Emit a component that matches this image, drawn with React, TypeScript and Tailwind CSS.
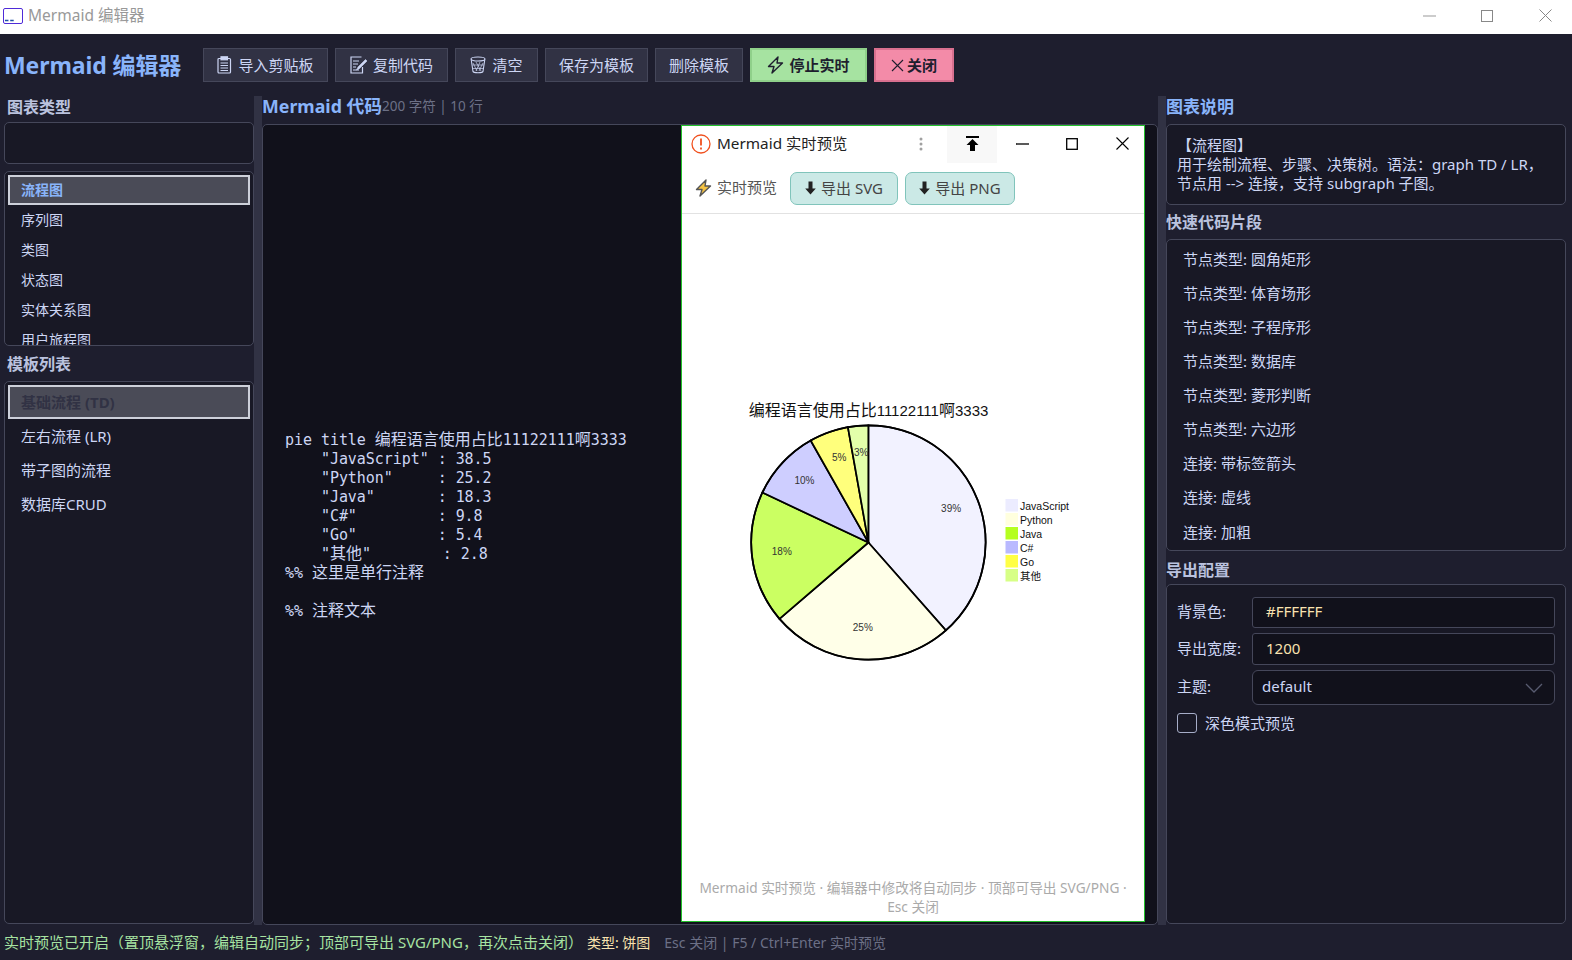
import React from "react";

const sans = "font-['Noto_Sans','Noto_Sans_CJK_SC',sans-serif]";

const pieData = [
  { name: "JavaScript", v: 38.5, c: "#ECECFF", p: "39%" },
  { name: "Python", v: 25.2, c: "#ffffde", p: "25%" },
  { name: "Java", v: 18.3, c: "#b5ff20", p: "18%" },
  { name: "C#", v: 9.8, c: "#b9b9ff", p: "10%" },
  { name: "Go", v: 5.4, c: "#ffff45", p: "5%" },
  { name: "其他", v: 2.8, c: "#d7ff86", p: "3%" },
];

function Pie() {
  const cx = 125.4, cy = 145.5, r = 117.2;
  const total = pieData.reduce((s, d) => s + d.v, 0);
  let a = 0;
  const slices = pieData.map((d) => {
    const s = a;
    const e = a + (d.v / total) * Math.PI * 2;
    a = e;
    const m = (s + e) / 2;
    const large = e - s > Math.PI ? 1 : 0;
    const path = `M${cx} ${cy}L${cx + r * Math.sin(s)} ${cy - r * Math.cos(s)}A${r} ${r} 0 ${large} 1 ${cx + r * Math.sin(e)} ${cy - r * Math.cos(e)}Z`;
    return { ...d, path, tx: cx + 0.75 * r * Math.sin(m), ty: cy - 0.75 * r * Math.cos(m) };
  });
  return (
    <svg width="340" height="298" viewBox="0 0 340 298" className="font-['Liberation_Sans','Noto_Sans_CJK_SC',sans-serif]">
      <text x="125.500" y="19" textAnchor="middle" fontSize="16" fill="#111">
        编程语言使用占比<tspan fontSize="15">11122111</tspan>啊<tspan fontSize="15">3333</tspan>
      </text>
      {slices.map((s) => (
        <path key={s.name} d={s.path} fill={s.c} fillOpacity="0.7" stroke="#000" strokeWidth="1.7" />
      ))}
      <circle cx={cx} cy={cy} r={r} fill="none" stroke="#000" strokeWidth="1.7" />
      {slices.map((s) => (
        <text key={s.name} x={s.tx + 0.5} y={s.ty} dy="1" textAnchor="middle" fontSize="10" fill="#333">{s.p}</text>
      ))}
      {pieData.map((d, i) => (
        <g key={d.name}>
          <rect x="262.500" y={102 + i * 14} width="12.5" height="12.5" fill={d.c} />
          <text x="277" y={112.5 + i * 14} fontSize="10.5" fill="#111">{d.name}</text>
        </g>
      ))}
    </svg>
  );
}

function ClipIcon() {
  return (
    <svg width="15" height="18" viewBox="0 0 15 18" fill="none" stroke="#cdd6f4" strokeWidth="1.2">
      <rect x="1" y="2.5" width="12.5" height="14.5" rx="1" />
      <rect x="4" y="0.8" width="6.5" height="3" fill="#cdd6f4" />
      <path d="M3.5 7h7.5M3.5 9.5h7.5M3.5 12h7.5M3.5 14.5h7.5" strokeWidth="1" />
    </svg>
  );
}
function MemoIcon() {
  return (
    <svg width="17" height="18" viewBox="0 0 17 18" fill="none" stroke="#cdd6f4" strokeWidth="1.2">
      <path d="M11.5 1H1v16h11.5v-6" />
      <path d="M3 5h6M3 8h5M3 11h3M3 14h6" strokeWidth="1" />
      <path d="M15.5 3.5L8 11l-1.5 3 3-1.5L17 5z" fill="#cdd6f4" strokeWidth="0.6" />
    </svg>
  );
}
function TrashIcon() {
  return (
    <svg width="16" height="18" viewBox="0 0 16 18" fill="none" stroke="#cdd6f4" strokeWidth="1.1">
      <ellipse cx="8" cy="3" rx="7" ry="2" />
      <path d="M1.2 3.5L3 15.5c.5 1.6 9.500 1.600 10 0L14.800 3.500" />
      <path d="M3 7l4 8M6 6l5 9M10 6l-4 9M13 7l-4 8M2.500 9h11M3 12.500h10" strokeWidth="0.7" />
    </svg>
  );
}
function Bolt({ fill = "none", stroke = "#1e1e2e" }: { fill?: string; stroke?: string }) {
  return (
    <svg width="17" height="18" viewBox="0 0 17 18" fill={fill} stroke={stroke} strokeWidth="1.4" strokeLinejoin="round">
      <path d="M11 1L1.500 10.500H7L5 17l10.500-10H10z" />
    </svg>
  );
}
function DownArrow() {
  return (
    <svg width="11" height="14" viewBox="0 0 11 14" fill="#222">
      <path d="M3.500 0.500h4v7h3.300L5.500 13.500 0.200 7.500h3.300z" />
    </svg>
  );
}

function Btn({ icon, label, w }: { icon?: React.ReactNode; label: string; w: string }) {
  return (
    <button className={`h-[34px] ${w} flex items-center justify-center gap-[6px] bg-[#313244] border border-[#45475a] text-[15px] text-[#cdd6f4]`}>
      {icon}
      <span>{label}</span>
    </button>
  );
}

function Heading({ children, blue, cls }: { children: React.ReactNode; blue?: boolean; cls: string }) {
  return <div className={`${cls} flex items-center font-bold text-[16px] ${blue ? "text-[#89b4fa]" : "text-[#bac2de]"}`}>{children}</div>;
}

const types = ["序列图", "类图", "状态图", "实体关系图", "用户旅程图"];
const templates = ["左右流程 (LR)", "带子图的流程", "数据库CRUD"];
const snippets = ["节点类型: 圆角矩形", "节点类型: 体育场形", "节点类型: 子程序形", "节点类型: 数据库", "节点类型: 菱形判断", "节点类型: 六边形", "连接: 带标签箭头", "连接: 虚线", "连接: 加粗"];

const code = `pie title 编程语言使用占比11122111啊3333
    "JavaScript" : 38.5
    "Python"     : 25.2
    "Java"       : 18.3
    "C#"         : 9.8
    "Go"         : 5.4
    "其他"        : 2.8
%% 这里是单行注释

%% 注释文本`;

function CodeText() {
  return (
    <div className="font-['DejaVu_Sans_Mono','Noto_Sans_CJK_SC',monospace] text-[15px] tracking-[-0.05px] text-[#cdd6f4]">
      {code.split("\n").map((line, n) => (
        <div key={n} className="h-[19px] leading-[19px] whitespace-pre overflow-visible">
          {line.split(/([\u4e00-\u9fff]+)/).map((p, i) =>
            i % 2 ? <span key={i} className="text-[16px] tracking-normal leading-[1px]">{p}</span> : p
          )}
        </div>
      ))}
    </div>
  );
}

export default function App() {
  return (
    <div className={`w-screen h-screen flex flex-col overflow-hidden bg-[#1e1e2e] text-[#cdd6f4] ${sans}`}>
      {/* window title bar */}
      <div className="h-[34px] shrink-0 bg-white flex items-center pl-[3px] pb-[3px]">
        <svg width="20" height="16" viewBox="0 0 20 16" fill="none" className="mr-[5px]">
          <rect x="0.500" y="0.500" width="19" height="15" rx="1.500" stroke="#4f2bd8" />
          <path d="M3.500 12.500h5M11 12.500h5" stroke="#1f4fa8" strokeWidth="1.500" transform="translate(-0.500,0) scale(0.7,1)" />
        </svg>
        <span className="text-[15.5px] text-[#999]">Mermaid 编辑器</span>
        <div className="ml-auto flex items-center text-[#888]">
          <div className="w-[54px] h-[31px] flex items-center justify-center">
            <svg width="13" height="2"><path d="M0 1h13" stroke="#999" /></svg>
          </div>
          <div className="w-[62px] h-[31px] flex items-center justify-center">
            <svg width="12" height="12"><rect x="0.500" y="0.500" width="11" height="11" fill="none" stroke="#888" /></svg>
          </div>
          <div className="w-[54px] h-[31px] flex items-center justify-center">
            <svg width="13" height="13"><path d="M0.500 0.500l12 12M12.500 0.500l-12 12" stroke="#888" /></svg>
          </div>
        </div>
      </div>

      {/* toolbar */}
      <div className="h-[62px] shrink-0 flex items-center pl-[4px]">
        <div className="w-[199px] text-[23px] font-bold tracking-[-0.1px] text-[#89b4fa] whitespace-nowrap">Mermaid 编辑器</div>
        <div className="flex gap-[7px]">
          <Btn w="w-[125px]" icon={<ClipIcon />} label="导入剪贴板" />
          <Btn w="w-[113px]" icon={<MemoIcon />} label="复制代码" />
          <Btn w="w-[83px]" icon={<TrashIcon />} label="清空" />
          <Btn w="w-[103px]" label="保存为模板" />
          <Btn w="w-[88px]" label="删除模板" />
          <button className="h-[34px] w-[117px] flex items-center justify-center gap-[5px] bg-[#a6e3a1] border-2 border-[#8fd08a] text-[15px] font-bold text-[#1e1e2e]">
            <Bolt />
            <span>停止实时</span>
          </button>
          <button className="h-[34px] w-[80px] flex items-center justify-center gap-[3px] bg-[#f38ba8] border-2 border-[#d9708f] text-[15px] font-bold text-[#1e1e2e]">
            <svg width="13" height="13" viewBox="0 0 13 13"><path d="M1 1l11 11M12 1L1 12" stroke="#1e1e2e" strokeWidth="1.100" /></svg>
            <span>关闭</span>
          </button>
        </div>
      </div>

      {/* columns */}
      <div className="flex-1 min-h-0 flex">
        {/* left */}
        <div className="w-[254px] shrink-0 flex flex-col pl-[4px]">
          <div className="pl-[3px]"><Heading cls="h-[26px] pb-[5px]">图表类型</Heading></div>
          <div className="h-[42px] shrink-0 bg-[#181825] border border-[#45475a] rounded-[5px]" />
          <div className="h-[175px] shrink-0 mt-[7px] bg-[#181825] border border-[#45475a] rounded-[5px] overflow-hidden pt-[3px] pl-[3px] pr-[3px]">
            <div className="h-[30px] flex items-center pl-[11px] pb-[1px] bg-[#4a4b57] border-2 border-[#cdd0da] text-[14px] font-bold text-[#89b4fa]">流程图</div>
            {types.map((t) => (
              <div key={t} className="h-[30px] shrink-0 flex items-center pl-[13px] pb-[2px] text-[14px]">{t}</div>
            ))}
          </div>
          <div className="pl-[3px]"><Heading cls="h-[35px]">模板列表</Heading></div>
          <div className="flex-1 bg-[#181825] border border-[#45475a] rounded-[5px] pt-[3px] px-[3px] mb-[1px]">
            <div className="h-[34px] flex items-center pl-[11px] bg-[#4a4b57] border-2 border-[#cdd0da] text-[15px] font-bold text-[#313244]">基础流程 (TD)</div>
            {templates.map((t) => (
              <div key={t} className="h-[34px] flex items-center pl-[13px] text-[15px]">{t}</div>
            ))}
          </div>
        </div>

        <div className="w-[8px] shrink-0 bg-[#313244]" />

        {/* center */}
        <div className="w-[896px] shrink-0 flex flex-col">
          <div className="h-[28px] shrink-0 flex items-center pb-[7px]">
            <span className="text-[17.8px] font-bold text-[#89b4fa]">Mermaid 代码</span>
            <span className="text-[13.5px] text-[#6c7086]">200 字符 | 10 行</span>
          </div>
          <div className="relative flex-1 min-h-0 bg-[#11111b] border border-[#45475a] rounded-[5px] flex items-center pl-[22px] pt-[2px]">
            <CodeText />

            {/* floating preview window */}
            <div className="absolute left-[418px] top-0 w-[464px] h-[797px] bg-white border border-[#22c02a] flex flex-col text-[#222]">
              <div className="h-[37px] shrink-0 flex items-center">
                <svg width="20" height="20" viewBox="0 0 20 20" fill="none" className="ml-[9px] shrink-0 -translate-y-[1px]">
                  <circle cx="10" cy="10" r="9" stroke="#f0501e" strokeWidth="1.300" />
                  <path d="M10 4.500v7M10 13.500v2" stroke="#f0501e" strokeWidth="1.800" />
                </svg>
                <span className="ml-[6px] w-[130px] shrink-0 pb-[2px] text-[15.3px] text-[#222] whitespace-nowrap">Mermaid 实时预览</span>
                <svg width="4" height="14" viewBox="0 0 4 14" fill="#a0a0a0" className="ml-[72px] shrink-0 -translate-y-[1px]">
                  <circle cx="2" cy="2" r="1.500" /><circle cx="2" cy="7" r="1.500" /><circle cx="2" cy="12" r="1.500" />
                </svg>
                <div className="ml-[24px] shrink-0 w-[50px] h-[37px] bg-[#f8f8f8] flex items-center justify-center pb-[2px]">
                  <svg width="13" height="15" viewBox="0 0 13 15" fill="#000">
                    <path d="M0 0h13v2H0zM6.500 3l6 6H9v6H4V9H.500z" />
                  </svg>
                </div>
                <div className="shrink-0 w-[50px] h-[37px] flex items-center justify-center pb-[2px]">
                  <svg width="13" height="2"><path d="M0 1h13" stroke="#000" strokeWidth="1.300" /></svg>
                </div>
                <div className="shrink-0 w-[50px] h-[37px] flex items-center justify-center pb-[2px]">
                  <svg width="12" height="12"><rect x="0.700" y="0.700" width="10.600" height="10.600" fill="none" stroke="#000" strokeWidth="1.300" /></svg>
                </div>
                <div className="shrink-0 w-[50px] h-[37px] flex items-center justify-center pb-[2px]">
                  <svg width="13" height="13"><path d="M0.500 0.500l12 12M12.500 0.500l-12 12" stroke="#000" strokeWidth="1.100" /></svg>
                </div>
              </div>
              <div className="h-[51px] shrink-0 flex items-center border-b border-[#e2e2e2] pl-[13px]">
                <Bolt fill="#f5c343" stroke="#555" />
                <span className="ml-[5px] pb-[2px] text-[15px] text-[#555]">实时预览</span>
                <button className="ml-[13px] w-[108px] h-[33px] rounded-[7px] bg-[#cbe9e6] border border-[#80c4bb] flex items-center justify-center gap-[5px] text-[15px] text-[#444]">
                  <DownArrow /><span>导出 SVG</span>
                </button>
                <button className="ml-[7px] w-[110px] h-[33px] rounded-[7px] bg-[#cbe9e6] border border-[#80c4bb] flex items-center justify-center gap-[5px] text-[15px] text-[#444]">
                  <DownArrow /><span>导出 PNG</span>
                </button>
              </div>
              <div className="flex-1 min-h-0 flex items-center justify-center">
                <Pie />
              </div>
              <div className="shrink-0 text-center text-[13.7px] leading-[19px] text-[#aaa] px-[8px] pb-[5px]">
                Mermaid 实时预览 · 编辑器中修改将自动同步 · 顶部可导出 SVG/PNG · Esc 关闭
              </div>
            </div>
          </div>
        </div>

        <div className="w-[8px] shrink-0 bg-[#313244]" />

        {/* right */}
        <div className="flex-1 min-w-0 flex flex-col pr-[6px]">
          <Heading cls="h-[28px] pb-[6px]" blue><span className="text-[17px]">图表说明</span></Heading>
          <div className="h-[81px] shrink-0 bg-[#181825] border border-[#45475a] rounded-[5px] px-[10px] pt-[11px] text-[15px] leading-[19px]">
            <div>【流程图】</div>
            <div>用于绘制流程、步骤、决策树。语法：graph TD / LR，</div>
            <div>节点用 --&gt; 连接，支持 subgraph 子图。</div>
          </div>
          <Heading cls="h-[34px]">快速代码片段</Heading>
          <div className="h-[312px] shrink-0 bg-[#181825] border border-[#45475a] rounded-[5px] pt-[3px] overflow-hidden">
            {snippets.map((s) => (
              <div key={s} className="h-[34.1px] flex items-center pl-[16px] pb-[2px] text-[15px]">{s}</div>
            ))}
          </div>
          <Heading cls="h-[33px] pt-[5px]">导出配置</Heading>
          <div className="flex-1 bg-[#181825] border border-[#45475a] rounded-[5px] pt-[12px] px-[10px] mb-[1px]">
            <div className="flex flex-col gap-[5px]">
              <div className="flex items-center">
                <span className="w-[75px] text-[15px] pb-[2px]">背景色:</span>
                <div className="flex-1 h-[31px] flex items-center pl-[13px] pb-[2px] bg-[#11111b] border border-[#45475a] rounded-[3px] text-[15px] text-[#f9e2af]">#FFFFFF</div>
              </div>
              <div className="flex items-center">
                <span className="w-[75px] text-[15px] pb-[2px]">导出宽度:</span>
                <div className="flex-1 h-[32px] flex items-center pl-[13px] pb-[2px] bg-[#11111b] border border-[#45475a] rounded-[3px] text-[15px] text-[#f9e2af]">1200</div>
              </div>
              <div className="flex items-center">
                <span className="w-[75px] text-[15px] pb-[2px]">主题:</span>
                <div className="flex-1 h-[35px] flex items-center justify-between pl-[9px] pr-[11px] bg-[#11111b] border border-[#45475a] rounded-[6px] text-[15px]">
                  <span className="pb-[2px]">default</span>
                  <svg width="18" height="10" viewBox="0 0 18 10" fill="none"><path d="M1 1l8 8 8-8" stroke="#585b70" strokeWidth="1.300" /></svg>
                </div>
              </div>
            </div>
            <div className="flex items-center mt-[7px]">
              <div className="w-[20px] h-[20px] rounded-[3px] border border-[#a6adc8]" />
              <span className="ml-[8px] text-[15px]">深色模式预览</span>
            </div>
          </div>
        </div>
      </div>

      {/* status bar */}
      <div className="h-[35px] shrink-0 flex items-center pl-[4px] whitespace-nowrap">
        <span className="text-[15px] text-[#a6e3a1]">实时预览已开启（置顶悬浮窗，编辑自动同步；顶部可导出 SVG/PNG，再次点击关闭）</span>
        <span className="ml-[4px] text-[14px] text-[#f9e2af]">类型: 饼图</span>
        <span className="ml-[14px] text-[14px] text-[#6c7086]">Esc 关闭 | F5 / Ctrl+Enter 实时预览</span>
      </div>
    </div>
  );
}
